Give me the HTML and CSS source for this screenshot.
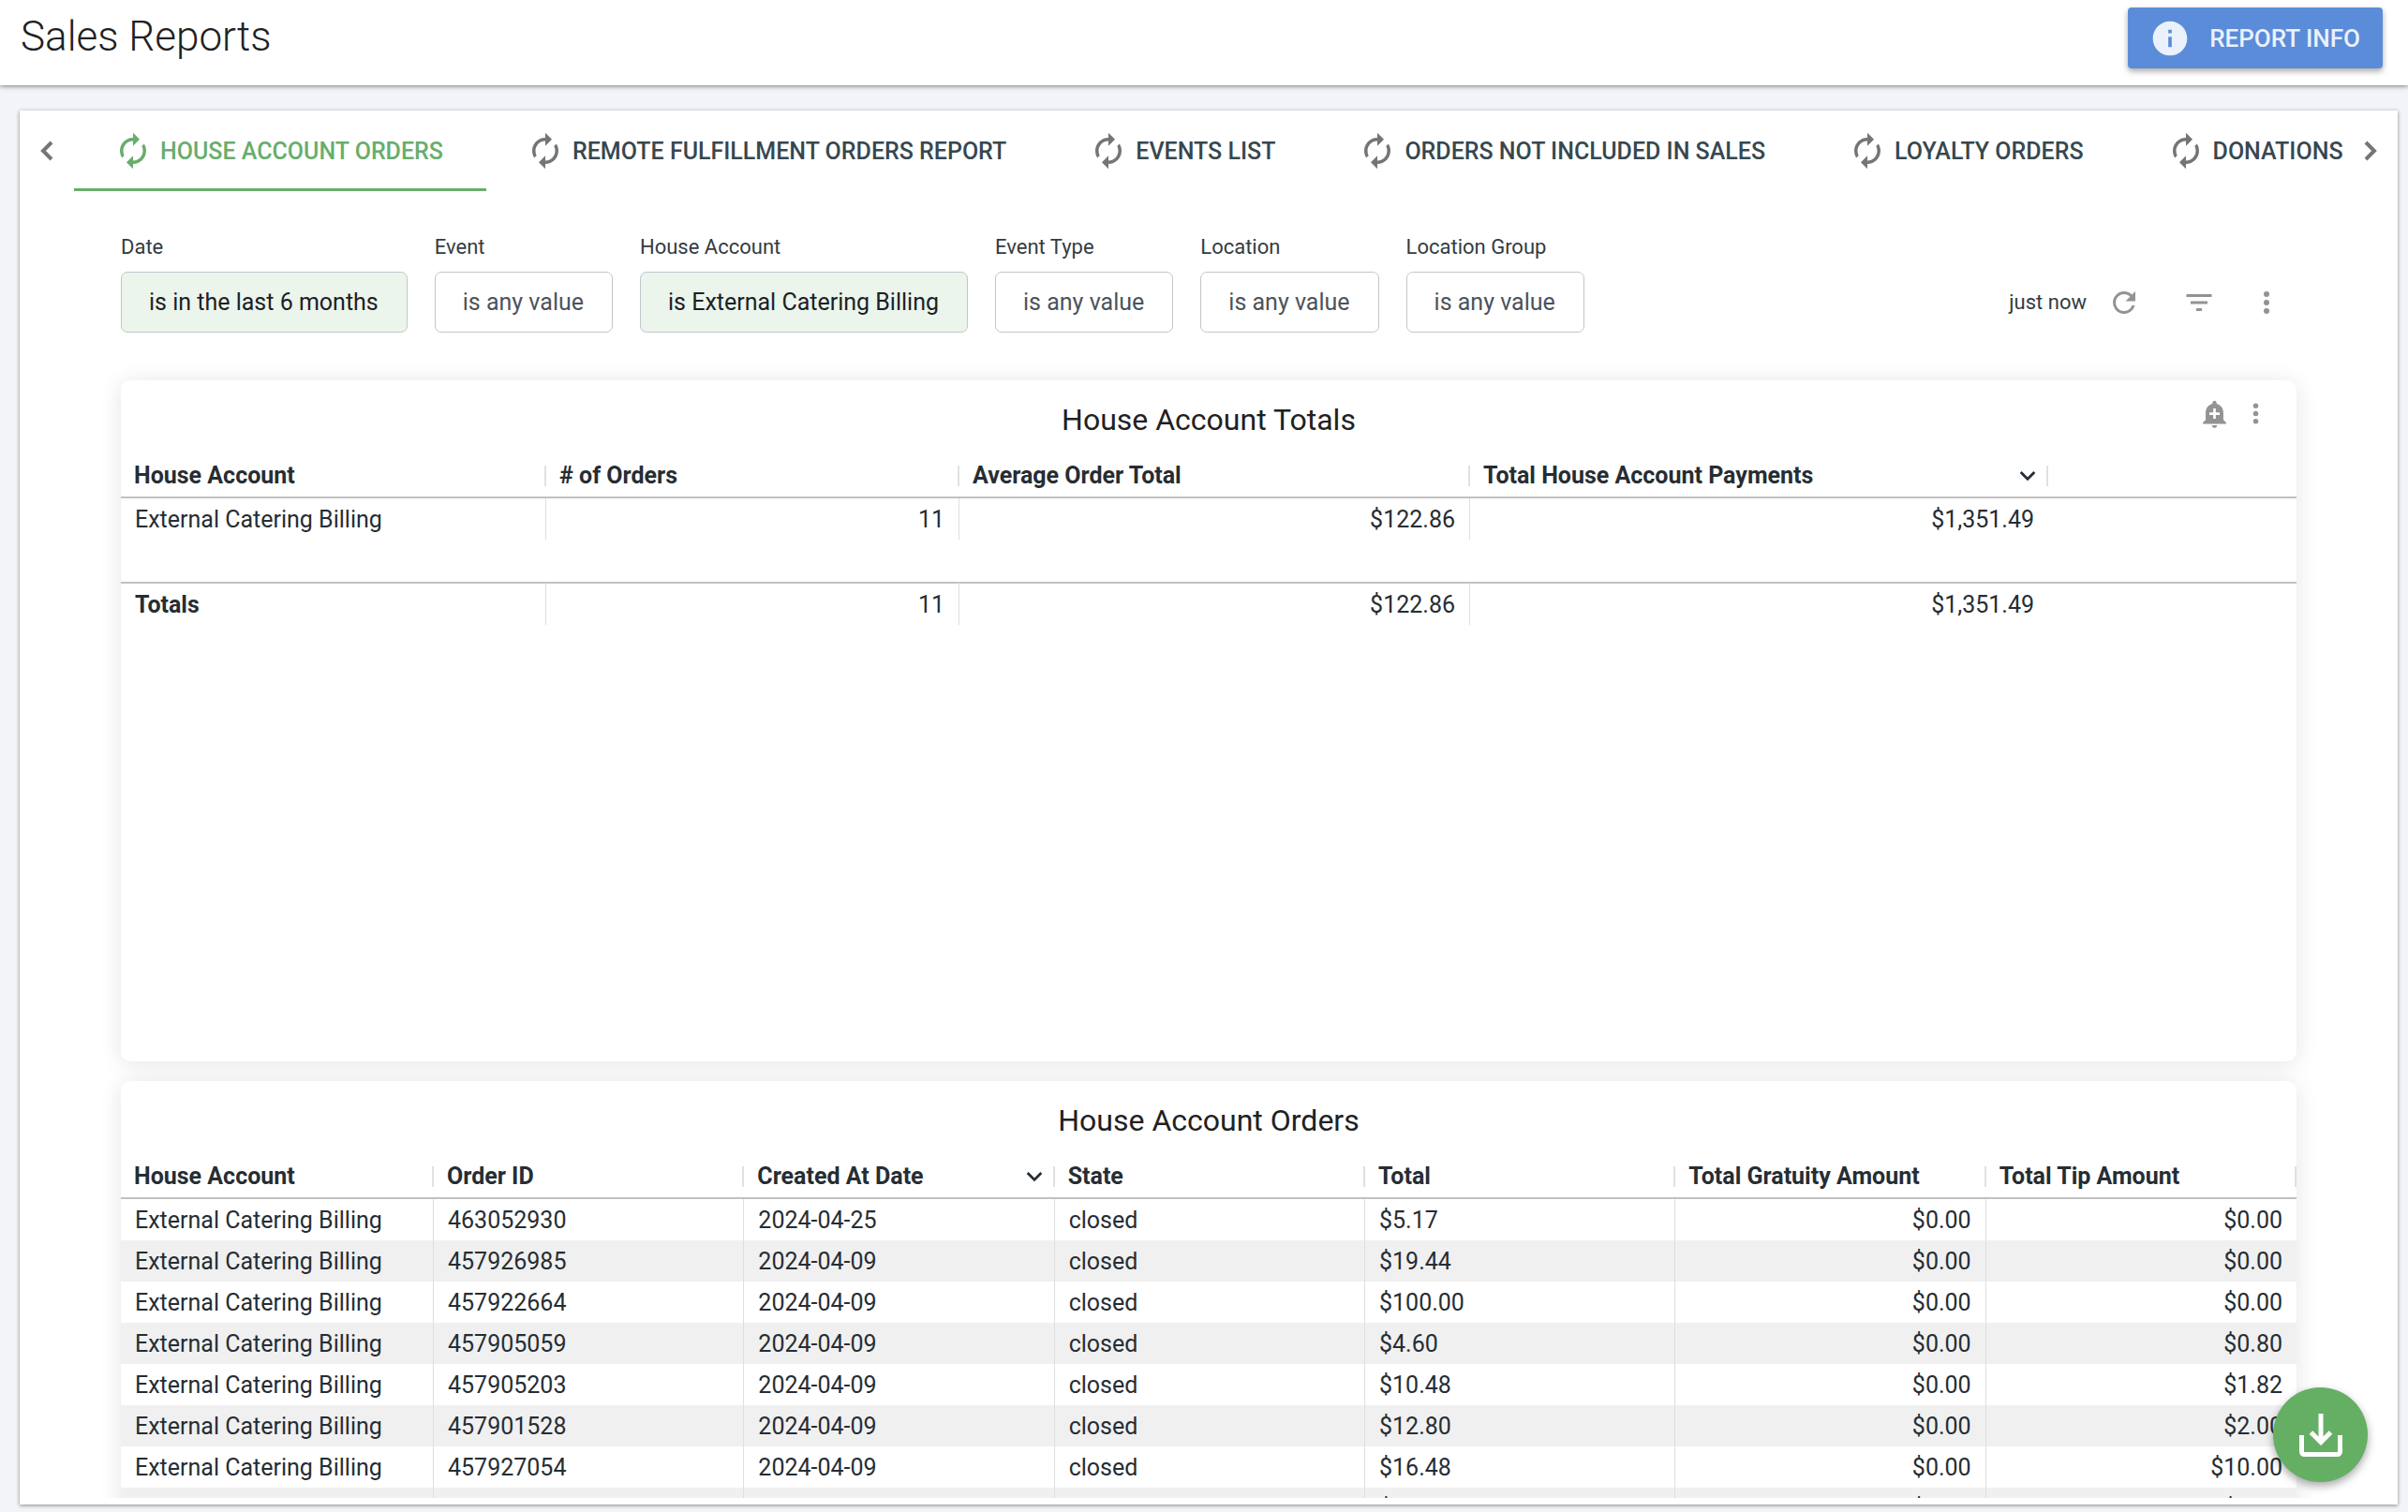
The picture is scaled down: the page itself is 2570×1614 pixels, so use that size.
FILE: index.html
```html
<!DOCTYPE html>
<html lang="en">
<head>
<meta charset="utf-8">
<meta name="viewport" content="width=device-width, initial-scale=1">
<title>Sales Reports</title>
<link rel="stylesheet" href="styles.css">
</head>
<body>
<svg class="sprite" aria-hidden="true">
  <symbol id="i-renew" viewBox="0 0 24 24"><path d="M12 6v3l4-4-4-4v3c-4.42 0-8 3.58-8 8 0 1.57.46 3.03 1.24 4.26L6.7 14.8A5.87 5.87 0 0 1 6 12c0-3.31 2.69-6 6-6zm6.76 1.74L17.3 9.2c.44.84.7 1.79.7 2.8 0 3.31-2.69 6-6 6v-3l-4 4 4 4v-3c4.42 0 8-3.58 8-8 0-1.57-.46-3.03-1.24-4.26z"/></symbol>
  <symbol id="i-more" viewBox="0 0 24 24"><circle cx="12" cy="6" r="2"/><circle cx="12" cy="12" r="2"/><circle cx="12" cy="18" r="2"/></symbol>
  <symbol id="i-down" viewBox="0 0 16 16"><path d="M1.500 4.500L8 11l6.500-6.500" fill="none" stroke="currentColor" stroke-width="2.500"/></symbol>
</svg>

<header class="topbar">
  <h1 class="topbar-title">Sales Reports</h1>
  <button class="info-button" type="button">
    <svg class="info-icon" viewBox="0 0 24 24" aria-hidden="true"><path d="M12 2C6.480 2 2 6.480 2 12s4.480 10 10 10 10-4.480 10-10S17.520 2 12 2zm1 15h-2v-6h2v6zm0-8h-2V7h2v2z"/></svg>
    Report Info
  </button>
</header>

<main class="panel">
  <nav class="tabbar" aria-label="Reports">
    <button class="tab-scroll" type="button" aria-label="Previous tabs"><svg class="icon-chevron" viewBox="0 0 24 24"><path d="M17 3L8 12l9 9"/></svg></button>
    <div class="tabs" role="tablist">
      <button class="tab tab-active" type="button" role="tab" aria-selected="true"><svg class="tab-icon"><use href="#i-renew"/></svg><span>House Account Orders</span></button>
      <button class="tab" type="button" role="tab"><svg class="tab-icon"><use href="#i-renew"/></svg><span>Remote Fulfillment Orders Report</span></button>
      <button class="tab" type="button" role="tab"><svg class="tab-icon"><use href="#i-renew"/></svg><span>Events List</span></button>
      <button class="tab" type="button" role="tab"><svg class="tab-icon"><use href="#i-renew"/></svg><span>Orders Not Included in Sales</span></button>
      <button class="tab" type="button" role="tab"><svg class="tab-icon"><use href="#i-renew"/></svg><span>Loyalty Orders</span></button>
      <button class="tab" type="button" role="tab"><svg class="tab-icon"><use href="#i-renew"/></svg><span>Donations</span></button>
    </div>
    <button class="tab-scroll" type="button" aria-label="Next tabs"><svg class="icon-chevron" viewBox="0 0 24 24"><path d="M7 3l9 9-9 9"/></svg></button>
  </nav>

  <div class="dashboard">
    <section class="controls">
      <div class="filters">
        <div class="filter"><label for="f-date">Date</label><button id="f-date" class="chip chip-set" type="button">is in the last 6 months</button></div>
        <div class="filter"><label for="f-event">Event</label><button id="f-event" class="chip" type="button">is any value</button></div>
        <div class="filter"><label for="f-account">House Account</label><button id="f-account" class="chip chip-set" type="button">is External Catering Billing</button></div>
        <div class="filter"><label for="f-type">Event Type</label><button id="f-type" class="chip" type="button">is any value</button></div>
        <div class="filter"><label for="f-location">Location</label><button id="f-location" class="chip" type="button">is any value</button></div>
        <div class="filter"><label for="f-group">Location Group</label><button id="f-group" class="chip" type="button">is any value</button></div>
      </div>
      <div class="actions">
        <span class="updated">just now</span>
        <button class="icon-button reload" type="button" aria-label="Reload"><svg class="icon" viewBox="0 0 24 24"><path d="M17.650 6.350A7.960 7.960 0 0 0 12 4a8 8 0 1 0 7.730 10h-2.080A6 6 0 1 1 12 6c1.660 0 3.140.69 4.220 1.780L13 11h7V4l-2.350 2.350z"/></svg></button>
        <button class="icon-button" type="button" aria-label="Filters"><svg class="icon" viewBox="0 0 24 24"><path d="M10 18h4v-2h-4v2zM3 6v2h18V6H3zm3 7h12v-2H6v2z"/></svg></button>
        <button class="icon-button" type="button" aria-label="Dashboard actions"><svg class="icon"><use href="#i-more"/></svg></button>
      </div>
    </section>

    <section class="tile tile-totals">
      <header class="tile-head">
        <h2 class="tile-title">House Account Totals</h2>
        <div class="tile-tools">
          <button class="tile-button" type="button" aria-label="Add alert"><svg class="icon-small" viewBox="0 0 24 24"><path d="M10.010 21.010c0 1.100.89 1.990 1.990 1.990s1.990-.89 1.990-1.990h-3.980zm8.870-4.190V11c0-3.250-2.250-5.970-5.290-6.690v-.72C13.590 2.710 12.880 2 12 2s-1.590.71-1.590 1.590v.72C7.370 5.030 5.120 7.750 5.120 11v5.820L3 18.940V20h18v-1.060l-2.120-2.120zM16 13.010h-3v3h-2v-3H8V11h3V8h2v3h3v2.010z"/></svg></button>
          <button class="tile-button" type="button" aria-label="Tile actions"><svg class="icon-small"><use href="#i-more"/></svg></button>
        </div>
      </header>
      <table class="grid">
        <colgroup><col class="c-name"><col class="c-count"><col class="c-average"><col class="c-payments"><col></colgroup>
        <thead>
          <tr><th><div class="head">House Account</div></th><th><div class="head"># of Orders</div></th><th><div class="head">Average Order Total</div></th><th><div class="head">Total House Account Payments<svg class="sort"><use href="#i-down"/></svg></div></th><td></td></tr>
        </thead>
        <tbody>
          <tr><td>External Catering Billing</td><td class="num">11</td><td class="num">$122.86</td><td class="num last">$1,351.49</td><td></td></tr>
          <tr class="spacer"><td colspan="5"></td></tr>
        </tbody>
        <tfoot>
          <tr><th scope="row">Totals</th><td class="num">11</td><td class="num">$122.86</td><td class="num last">$1,351.49</td><td></td></tr>
        </tfoot>
      </table>
    </section>

    <section class="tile">
      <header class="tile-head"><h2 class="tile-title">House Account Orders</h2></header>
      <table class="grid striped">
        <colgroup><col class="c-account"><col><col><col><col><col><col></colgroup>
        <thead>
          <tr><th><div class="head">House Account</div></th><th><div class="head">Order ID</div></th><th><div class="head">Created At Date<svg class="sort"><use href="#i-down"/></svg></div></th><th><div class="head">State</div></th><th><div class="head">Total</div></th><th><div class="head">Total Gratuity Amount</div></th><th><div class="head">Total Tip Amount</div></th></tr>
        </thead>
        <tbody>
          <tr><td>External Catering Billing</td><td>463052930</td><td>2024-04-25</td><td>closed</td><td>$5.17</td><td class="num">$0.00</td><td class="num last">$0.00</td></tr>
          <tr><td>External Catering Billing</td><td>457926985</td><td>2024-04-09</td><td>closed</td><td>$19.44</td><td class="num">$0.00</td><td class="num last">$0.00</td></tr>
          <tr><td>External Catering Billing</td><td>457922664</td><td>2024-04-09</td><td>closed</td><td>$100.00</td><td class="num">$0.00</td><td class="num last">$0.00</td></tr>
          <tr><td>External Catering Billing</td><td>457905059</td><td>2024-04-09</td><td>closed</td><td>$4.60</td><td class="num">$0.00</td><td class="num last">$0.80</td></tr>
          <tr><td>External Catering Billing</td><td>457905203</td><td>2024-04-09</td><td>closed</td><td>$10.48</td><td class="num">$0.00</td><td class="num last">$1.82</td></tr>
          <tr><td>External Catering Billing</td><td>457901528</td><td>2024-04-09</td><td>closed</td><td>$12.80</td><td class="num">$0.00</td><td class="num last">$2.00</td></tr>
          <tr><td>External Catering Billing</td><td>457927054</td><td>2024-04-09</td><td>closed</td><td>$16.48</td><td class="num">$0.00</td><td class="num last">$10.00</td></tr>
          <tr><td></td><td></td><td></td><td></td><td>$0.00</td><td class="num">$0.00</td><td class="num last">$0.00</td></tr>
        </tbody>
      </table>
    </section>
  </div>
</main>

<button class="fab" type="button" aria-label="Download">
  <svg class="fab-icon" viewBox="0 0 46 46"><path d="M2.500 23v17.500a3 3 0 0 0 3 3h35a3 3 0 0 0 3-3V23" stroke-width="5"/><path d="M23 0v30M12.500 20L23 30.500 33.500 20" stroke-width="5"/></svg>
</button>
</body>
</html>
```

FILE: styles.css
```css
* { box-sizing: border-box; }

body {
  margin: 0;
  height: 100vh;
  display: flex;
  flex-direction: column;
  overflow: hidden;
  background: #f2f4f7;
  color: #262d33;
  font-family: Roboto, "Liberation Sans", sans-serif;
  font-size: 25px;
}

button {
  margin: 0;
  padding: 0;
  border: 0;
  background: none;
  color: inherit;
  font: inherit;
  cursor: pointer;
}

svg { display: block; flex: none; fill: currentColor; }
.sprite { position: absolute; width: 0; height: 0; }

/* Page header */
.topbar {
  flex: none;
  display: flex;
  align-items: flex-start;
  justify-content: space-between;
  height: 91px;
  padding: 8px 27px 0 22px;
  background: #fff;
  box-shadow: 0 1px 5px rgba(0, 0, 0, 0.5);
}
.topbar-title {
  margin: 0;
  color: #212121;
  font-size: 44px;
  font-weight: 300;
  line-height: 62px;
}
.info-button {
  display: flex;
  align-items: center;
  gap: 20px;
  height: 65px;
  padding: 0 24px 0 23px;
  border-radius: 4px;
  background: #5b8cd9;
  color: #ebf1fb;
  font-size: 26px;
  font-weight: 500;
  text-transform: uppercase;
  box-shadow: 0 3px 6px rgba(0, 0, 0, 0.35);
}
.info-icon { width: 44px; height: 44px; }

/* Report panel */
.panel {
  flex: 1;
  min-height: 0;
  display: flex;
  flex-direction: column;
  margin: 27px 11px 8px 21px;
  padding-bottom: 7px;
  background: #fff;
  box-shadow: 0 1px 4px rgba(0, 0, 0, 0.45);
}
.tabbar { flex: none; display: flex; height: 86px; }
.tab-scroll {
  flex: none;
  display: flex;
  align-items: center;
  justify-content: center;
  width: 58px;
  color: #757575;
}
.icon-chevron {
  width: 24px;
  height: 24px;
  fill: none;
  stroke: currentColor;
  stroke-width: 4;
}
.tabs { flex: 1; min-width: 0; display: flex; overflow: hidden; }
.tab {
  flex: none;
  display: flex;
  align-items: center;
  gap: 8px;
  padding: 3px 46px 0 42px;
  border-bottom: 3px solid transparent;
  color: #37474f;
  font-weight: 500;
  text-transform: uppercase;
  white-space: nowrap;
}
.tab-icon { width: 42px; height: 42px; color: #757575; }
.tab-active { border-color: #68ad6c; color: #68ad6c; }
.tab-active .tab-icon { color: inherit; }

.dashboard {
  flex: 1;
  min-height: 0;
  overflow: hidden;
  padding: 47px 108px 0;
}

/* Filters */
.controls {
  display: flex;
  justify-content: space-between;
  align-items: flex-end;
  margin-bottom: 51px;
}
.filters { display: flex; gap: 29px; }
.filter { display: flex; flex-direction: column; gap: 13px; }
.filter label { color: #343c42; font-size: 22px; line-height: 26px; }
.chip {
  height: 65px;
  padding: 0 30px 0 29px;
  border: 1px solid #c1c6cc;
  border-radius: 7px;
  background: #fff;
  color: #4c535b;
  white-space: nowrap;
}
.chip-set { background: #ebf5ec; color: #1c2125; }
.actions {
  display: flex;
  align-items: center;
  gap: 32px;
  height: 65px;
  padding-right: 12px;
  color: #939393;
}
.updated { margin-right: -12px; color: #343c42; font-size: 22px; }
.icon-button { display: flex; justify-content: center; width: 40px; }
.reload { margin-right: 8px; }
.icon { width: 36px; height: 36px; }

/* Tiles */
.tile {
  margin-bottom: 21px;
  overflow: hidden;
  border-radius: 10px;
  background: #fff;
  box-shadow: 0 2px 24px rgba(0, 0, 0, 0.11);
}
.tile-totals { min-height: 727px; }
.tile-head {
  display: grid;
  grid-template-columns: 1fr auto 1fr;
  align-items: center;
  height: 81px;
  padding: 3px 26px 0;
}
.tile-title {
  grid-column: 2;
  margin: 0;
  color: #212121;
  font-size: 32px;
  font-weight: 400;
  line-height: 40px;
}
.tile-tools {
  display: flex;
  justify-content: flex-end;
  gap: 10px;
  padding-bottom: 14px;
  color: #939393;
}
.tile-button { width: 34px; height: 34px; }
.icon-small { width: 33px; height: 33px; }

/* Tables */
.grid {
  width: 100%;
  border-spacing: 0;
  table-layout: fixed;
}
.c-name { width: 454px; }
.c-count { width: 441px; }
.c-average { width: 545px; }
.c-payments { width: 617px; }
.c-account { width: 334px; }
.grid th,
.grid td {
  height: 44px;
  padding: 2px 15px 0;
  line-height: 30px;
  text-align: left;
  white-space: nowrap;
}
.grid thead th,
.grid thead td {
  height: 45px;
  padding: 0;
  border-bottom: 2px solid #c1c1c1;
  vertical-align: top;
}
.head {
  display: flex;
  align-items: center;
  justify-content: space-between;
  height: 22px;
  margin-top: 10px;
  padding: 0 11px 0 14px;
  border-right: 2px solid #dee1e5;
}
.sort { width: 18px; height: 18px; }
.grid tbody td,
.grid tfoot th,
.grid tfoot td { border-right: 1px solid #dcdfe3; }
.grid .last,
.grid tbody td:last-child,
.grid tfoot td:last-child { border-right: 0; }
.grid .num { text-align: right; }
.grid .spacer td { height: 45px; }
.grid tfoot th,
.grid tfoot td { height: 46px; border-top: 2px solid #c1c1c1; }
.striped tbody tr:nth-child(even) { background: #f0f0f0; }

/* Floating download button */
.fab {
  position: fixed;
  right: 43px;
  bottom: 32px;
  display: flex;
  align-items: center;
  justify-content: center;
  width: 101px;
  height: 101px;
  border-radius: 50%;
  background: #65af65;
  color: #fff;
  box-shadow: 0 4px 10px rgba(0, 0, 0, 0.35);
}
.fab-icon { width: 46px; height: 46px; fill: none; stroke: currentColor; }
```
